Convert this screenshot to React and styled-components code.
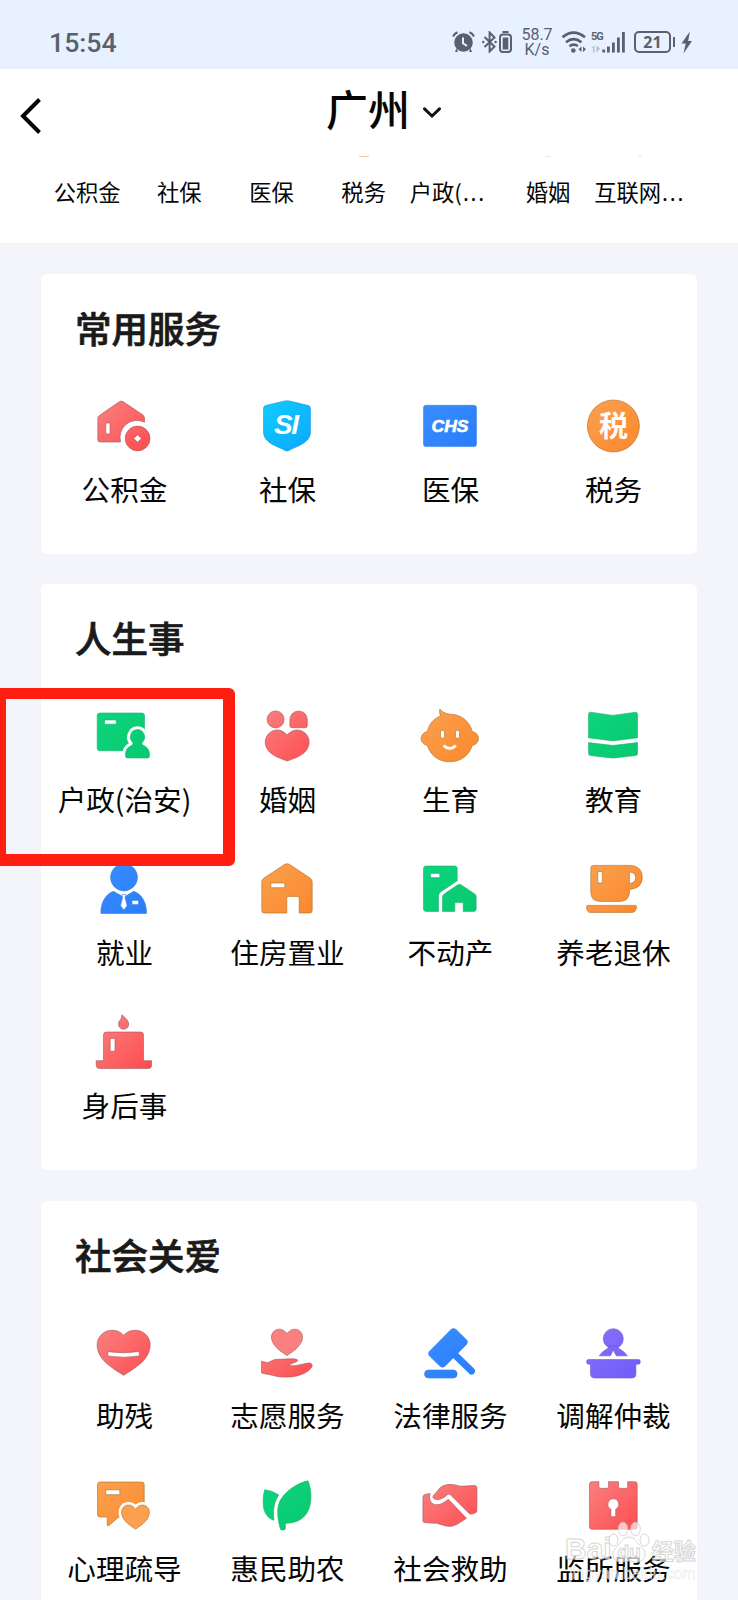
import React, { useId } from 'react'
import styled, { createGlobalStyle } from 'styled-components'

const HEART = 'M0 -8 C-3 -14 -12 -15 -15 -8 C-18 1 -8 9 0 14 C8 9 18 1 15 -8 C12 -15 3 -14 0 -8Z'
const PERSON =
  'M45.3 25.6a7.4 7.4 0 0 1 5 12.8c-1 1.4 0 2.6 2.2 3.6 4 2 5 5.5 5 9.5 0 2-.8 2.5-2.5 2.5H36c-1.8 0-2.5-.6-2.5-2.5 0-4 1-7.5 5-9.5 2.2-1 3.2-2.2 2.2-3.6a7.4 7.4 0 0 1 4.6-12.8z'

const tones = {
  red: ['#fa7f7f', '#fd4f51', '#a3565c'],
  orange: ['#fba04e', '#fb892f', '#a8702c'],
  green: ['#0cd57e', '#08c970', '#1fae6b'],
  blue: ['#3a8dff', '#297dfa', '#3b82e4'],
  purple: ['#8871fb', '#705df8', '#6a5ac4'],
  cyan: ['#10ccff', '#0ca8fc', '#1698d8'],
}

const icons = {
  fund: (
    <>
      <path d="M8 21 L27.5 7.6 Q29.2 6.6 31 7.6 L50.4 20.6 Q52.5 22 52.5 24 V28.2 A17 17 0 0 0 28.6 48 H8 Q5.8 48 5.8 45.8 V24.5 Q5.8 22.4 8 21Z" />
      <circle cx="45.6" cy="44.5" r="12.4" />
      <path className="cut" d="M13.8 29h4.2v11h-4.2zM45.6 40.7l3.8 3.8-3.8 3.8-3.8-3.8z" />
    </>
  ),
  social: (
    <>
      <path d="M10.5 11.6 L29.5 7 Q32 6.5 34.5 7 L53.5 11.6 Q55.5 12.2 55.5 14.5 V38 C55.5 49 42 52 34 56.4 Q32 57.5 30 56.4 C22 52 8.5 49 8.5 38 V14.5 Q8.5 12.2 10.5 11.6Z" />
      <text x="31.5" y="39.5" fontSize="28" fontStyle="italic" fontWeight="700" textLength="25">SI</text>
    </>
  ),
  medical: (
    <>
      <rect x="5.5" y="11.3" width="53" height="41.3" rx="2.5" />
      <text className="bold" x="32" y="38" fontSize="16.5" fontStyle="italic" fontWeight="700" textLength="37" lengthAdjust="spacingAndGlyphs">CHS</text>
    </>
  ),
  tax: (
    <>
      <circle cx="32.4" cy="32" r="26" />
      <text className="cjk" x="32.4" y="43" fontSize="29" fontWeight="700">税</text>
    </>
  ),
  household: (
    <>
      <rect x="5.2" y="9" width="47.3" height="37.7" rx="2.5" />
      <path className="cut" d="M12.5 16h11.7v4.2H12.5z" />
      <path className="ringed" d={PERSON} />
      <path d={PERSON} />
    </>
  ),
  marriage: (
    <>
      <circle cx="20.6" cy="15.4" r="8.5" />
      <path d="M34.9 21.7v-6a8.7 8.7 0 0 1 17.4 0v6q0 2-2 2H36.9q-2 0-2-2z" />
      <path d="M32.2 31c4.5-5.5 11.5-6.5 16.5-3 6.5 4.5 7 12.5 2.5 18.5C47 52 39 54.5 32.2 57 25.5 54.5 17.5 52 13.2 46.5c-4.500-6-4-14 2.5-18.5 5-3.5 12-2.5 16.5 3z" />
    </>
  ),
  baby: (
    <>
      <path d="M21.8 5c2 3 5 4.2 10 5.2 11.5 0 19.7 7 22.5 17.3 8.3 2 8.3 12 0 14-3.2 10-11.5 16.3-22.5 16.3S12.5 51.5 9.3 41.5c-8.3-2-8.3-12 0-14C11.3 20 15.5 14.5 22.5 12Q21 8.5 21.8 5z" />
      <rect className="cut" x="22.5" y="26.3" width="4" height="8" rx="1.5" />
      <rect className="cut" x="37.5" y="26.3" width="4" height="8" rx="1.5" />
      <path className="line" d="M25.6 41.5q6 6 12.2 0" />
    </>
  ),
  book: (
    <>
      <path d="M9.5 8.2 31.8 11.4 54.5 8.2Q56.5 8 56.5 10.5V33.8L33.5 36.7Q31.8 36.9 30.2 36.7L7.5 33.8V10.5Q7.5 8 9.5 8.2z" />
      <path d="M7.5 38.6 L30.2 41.3Q31.8 41.5 33.5 41.3L56.5 38.6V49.5Q56.5 51.3 54.5 51.5L33.5 53.9Q31.8 54.1 30.2 53.9L9.5 51.5Q7.5 51.3 7.5 49.5z" />
    </>
  ),
  job: (
    <>
      <circle cx="32" cy="20.4" r="13.5" />
      <path d="M8.9 56.5c-.6-9 4-20 13.5-22.5 5.5 4.4 13 4.4 18.5 0C50.5 36.5 55 47.5 54.5 56.5z" />
      <path className="line" d="M20.5 31.5Q27 35.5 31.8 38.2 36.5 35.5 42.8 31.5" />
      <path className="cut" d="M29.9 37.5h3.8l-.6 3.3 2 8-3.3 4.2-3.3-4.2 2-8zM40 43.4h6.5v4H40z" />
    </>
  ),
  housing: (
    <>
      <path d="M9 21 29.8 7.3Q32.1 6 34.4 7.3L55 21Q57.2 22.5 57.2 24.5V53.5Q57.2 56 54.8 56H44.2V41Q44.2 39.4 42.5 39.4H33.5Q31.8 39.4 31.8 41V56H9.2Q6.8 56 6.8 53.5V24.5Q6.8 22.5 9 21z" />
      <path className="cut" d="M15.8 26h14v4.7h-14z" />
    </>
  ),
  estate: (
    <>
      <path d="M8 9H36.7Q39.2 9 39.2 11.5V23.8L22.5 35Q20.5 36.5 20.5 39V54.4H8Q5.5 54.4 5.5 52V11.5Q5.5 9 8 9z" />
      <path d="M26.5 36.8 39.8 27.8Q41.4 26.8 43 27.8L56.5 36.8Q58.2 37.9 58.2 40V52Q58.2 54.4 56 54.4H45.2V45.6H36.8V54.4H24.5V40.5Q24.5 38 26.5 36.8z" />
      <path className="cut" d="M12.5 16.4h9.3v4.2h-9.3z" />
    </>
  ),
  cup: (
    <>
      <path d="M12.3 8.4H50Q61.3 9.5 61.3 20.4T48.5 32.4V35.5Q48 44.4 39 44.4H19.3Q9.8 44.4 9.8 35V11Q9.8 8.4 12.3 8.4z" />
      <path d="M6.5 48.4H54.7Q55.7 48.4 55.5 50 55 55.4 51 55.4H9Q6 55.4 5.5 50 5.5 48.4 6.5 48.4z" />
      <path className="cut" d="M16.8 14.7h4.5V26h-4.5zM48.4 15q6.2.3 6.2 5.7t-6.2 5.7z" />
    </>
  ),
  candle: (
    <>
      <path d="M29.8 4.8Q36.7 10 36.7 14.2A5.1 5.1 0 0 1 26.5 14.2Q26.5 11.5 28.5 9.5 29.8 8 29.8 4.8z" />
      <path d="M14.5 22h34Q51.5 22 51.5 25V50.7H59.6V55Q59.6 58.5 56.5 58.5H7.5Q4.2 58.5 4.2 55V50.7H11.5V25Q11.5 22 14.5 22z" />
      <path className="cut" d="M18.2 28.5h4.8v12.7h-4.8z" />
    </>
  ),
  disabled: (
    <>
      <path d="M31.6 14.2c4.5-5 13-7 20-2.5 7.5 5 8.5 14.5 3.5 23C50.5 43 39 49.5 31.6 54.3 24.3 49.5 12.8 43 8.2 34.7c-5-8.5-4-18 3.5-23 7-4.5 15.4-2.5 19.9 2.5z" />
      <path className="cut" d="M15.8 30.7Q31.6 33 47.3 30.5V35Q31.6 37.5 15.8 35z" />
    </>
  ),
  volunteer: (
    <>
      <path d={HEART} transform="translate(32 20.8) scale(1 .98)" />
      <path d="M6.5 40.2 12.5 41.7C16 40.5 18 38.3 23 38.3L36 37.8C44 37.5 44.5 40 39.5 41.5Q36.5 43 33.3 43.9Q39 45.8 45 43.8L51.5 42.2C56 41.2 58.5 43.5 56.5 46.5 52.5 52 44 55.2 36 55.9 28 56.4 22 55.8 18.5 54.5L6.5 52z" />
    </>
  ),
  law: (
    <>
      <path d="M33 8.5Q35.5 6.3 38 8.5L48.5 18.8Q50.5 21 48.5 23.5L27 45.2Q24.5 47.4 22 45.2L11.5 35Q9.3 32.5 11.5 30.2z" />
      <path className="limb" d="M35.5 32.5 53.5 50" />
      <rect x="6.5" y="49" width="32.7" height="8" rx="4" />
    </>
  ),
  mediate: (
    <>
      <circle cx="32.3" cy="17.7" r="10" />
      <path d="M28 25H36.5Q36.5 27 39.5 28.5 44 31 46.3 34.8H35.3L32.3 29 29.3 34.8H18.3Q20.5 31 25 28.5 28 27 28 25z" />
      <path d="M7.5 38.6H57.5Q59.2 38.6 59.2 40V41.5Q59.2 43.2 57.5 43.2H54.9V53Q54.9 57 51 57H13.5Q9.5 57 9.5 53V43.2H7.5Q5.7 43.2 5.7 41.5V40Q5.7 38.6 7.5 38.6z" />
    </>
  ),
  mind: (
    <>
      <path d="M8 8H49.7Q52.2 8 52.2 10.5V43H26.8L17 51.5Q15.2 52.6 15.2 50.5V43H8Q5.5 43 5.5 40.5V10.5Q5.5 8 8 8z" />
      <path className="cut" d="M13.8 15.8h14v4.9h-14z" />
      <path className="ringed" d={HEART} transform="translate(43.5 42.6) scale(.9)" />
      <path d={HEART} transform="translate(43.5 42.6) scale(.9)" />
    </>
  ),
  farming: (
    <>
      <path d="M53 6.8C56.5 15 57.5 29 52.5 38 48.5 45.5 40 49.5 30.5 49.3L30.3 54.5Q30.3 56 28.8 56H26.8Q25.5 56 25.2 54.5C23.5 48 21.5 39 23.5 31 26.5 20 40 9.5 53 6.8z" />
      <path d="M9.8 15.7Q17 16.5 23.8 21C19 28 17.5 37 19 46.3 13.5 44.5 9.5 40 8.5 33 7.8 27 8 21 9.8 15.7z" />
    </>
  ),
  rescue: (
    <>
      <path d="M24.5 12Q29.5 9.5 36 10.7L43 12.3 56.5 11.4Q58.9 11.3 58.9 14V36.5Q58.9 38.8 56.5 39.3L51.9 40.3 32.7 21Q31 19.3 29.3 20.7C27 22.8 23 26 18.8 25.5 14.3 24.8 13.8 22.2 16.8 20 19 18 20.5 14.5 24.5 12z" />
      <path d="M7.5 20.3 12.2 19.5C10.5 23.5 12 30 18 30.7 23 31 26.5 28 30.3 25.3L48.5 44.3 39.5 50Q34 53.5 28 52L18.5 49.3 7.5 48.8Q4.9 48.8 4.9 46.5V23Q4.9 20.8 7.5 20.3z" />
    </>
  ),
  prison: (
    <>
      <path d="M11 7.7H17.9V12.8Q17.9 14.3 19.4 14.3H26Q27.5 14.3 27.5 12.8V7.7H37.5V12.8Q37.5 14.3 39 14.3H45.2Q46.7 14.3 46.7 12.8V7.7H53.7Q56.2 7.7 56.2 10.2V52.8Q56.2 55.3 53.7 55.3H11Q8.5 55.3 8.5 52.8V10.2Q8.5 7.7 11 7.7z" />
      <path className="cut" d="M32.3 24.8a5.5 5.5 0 0 1 2.4 10.4v7.5h-4.8v-7.5a5.5 5.5 0 0 1 2.4-10.4z" />
    </>
  ),
}

const sections = [
  {
    title: '常用服务',
    items: [
      ['公积金', 'fund', 'red'],
      ['社保', 'social', 'cyan'],
      ['医保', 'medical', 'blue'],
      ['税务', 'tax', 'orange'],
    ],
  },
  {
    title: '人生事',
    items: [
      ['户政(治安)', 'household', 'green'],
      ['婚姻', 'marriage', 'red'],
      ['生育', 'baby', 'orange'],
      ['教育', 'book', 'green'],
      ['就业', 'job', 'blue'],
      ['住房置业', 'housing', 'orange'],
      ['不动产', 'estate', 'green'],
      ['养老退休', 'cup', 'orange'],
      ['身后事', 'candle', 'red'],
    ],
  },
  {
    title: '社会关爱',
    items: [
      ['助残', 'disabled', 'red'],
      ['志愿服务', 'volunteer', 'red'],
      ['法律服务', 'law', 'blue'],
      ['调解仲裁', 'mediate', 'purple'],
      ['心理疏导', 'mind', 'orange'],
      ['惠民助农', 'farming', 'green'],
      ['社会救助', 'rescue', 'red'],
      ['监所服务', 'prison', 'red'],
    ],
  },
]

const tabs = [
  { label: '公积金' },
  { label: '社保' },
  { label: '医保' },
  { label: '税务', edge: '#e9c9a0', edgeWidth: 10 },
  { label: '户政(', clipped: true },
  { label: '婚姻', edge: '#e6e2e0', edgeWidth: 5 },
  { label: '互联网', clipped: true, edge: '#e8e8e8', edgeWidth: 4 },
]

const ServiceIcon = ({ name, tone }) => {
  const id = useId()
  const [from, to, edge] = tones[tone]

  return (
    <Glyph viewBox="0 0 64 64" $fill={`url(#${id})`} $edge={edge}>
      <defs>
        <linearGradient id={id} gradientUnits="userSpaceOnUse" x1="8" y1="8" x2="54" y2="56">
          <stop offset="0" stopColor={from} />
          <stop offset="1" stopColor={to} />
        </linearGradient>
      </defs>
      {icons[name]}
    </Glyph>
  )
}

const StatusBar = () => (
  <Status>
    <Time>15:54</Time>
    <StatusIcon width="23" height="22" viewBox="0 0 23 22">
      <circle cx="11.5" cy="11.5" r="9.3" />
      <path d="M4.5 17 3 21h3zM18.5 17 20 21h-3z" />
      <path className="stroke" d="M1 5.5Q2.5 2.5 5.5 1.3M22 5.5Q20.5 2.5 17.5 1.3" />
      <path className="light" d="M11 6.5v5.8l4 2.7" />
    </StatusIcon>
    <StatusIcon $gap={7} width="15" height="22" viewBox="0 0 15 22">
      <path className="stroke" d="M2.5 6 12.5 15.5 7.6 20.5V1.5L12.5 6.5 2.5 16" />
      <circle cx="1.3" cy="11" r="1.2" />
      <circle cx="13.6" cy="11" r="1.2" />
    </StatusIcon>
    <StatusIcon $gap={2} width="13" height="22" viewBox="0 0 13 22">
      <rect className="stroke" x="1" y="3.5" width="11" height="17.5" rx="3" />
      <path d="M3.5 0h6v2h-6zM3.7 6.5h5.6v12H3.7z" />
    </StatusIcon>
    <Speed>
      <span>58.7</span>
      <span>K/s</span>
    </Speed>
    <StatusIcon $gap={8} width="26" height="22" viewBox="0 0 26 22">
      <path className="stroke thick" d="M1.5 6.3Q12.5-3 24 6.3M5 11.2Q12.5 5 20.5 11.2M8.5 15.3Q12.5 12 16.8 15" />
      <circle cx="12.3" cy="19.5" r="2.3" />
      <path d="M20.5 15.5v5.5L17.5 18.3zM22 15.5v5.5l3-2.7z" />
    </StatusIcon>
    <Signal>
      <Network>5G</Network>
      <StatusIcon width="35" height="22" viewBox="0 0 35 22">
        <path d="M11.3 18.5h2.8v3h-2.8zM16 15.5h2.8v6H16zM21 11.5h2.8v10H21zM26 6.5h2.8v15H26zM31 1h2.8v20.5H31z" />
        <path className="faint" d="M3.5 14.5v7h-1.5v-4.5H.5zM5.5 14.5v7L9 17.5z" />
      </StatusIcon>
    </Signal>
    <Battery>21</Battery>
    <StatusIcon $gap={5} width="12" height="23" viewBox="0 0 12 23">
      <path d="M8.8.5.5 12.5h4.2L2.5 22.5l8.5-12.5H7.2z" />
    </StatusIcon>
  </Status>
)

const App = () => (
  <Page>
    <GlobalStyle />
    <StatusBar />
    <Header>
      <TitleBar>
        <BackIcon viewBox="0 0 24 38">
          <path d="M20.5 2.5 4 19l16.5 16.5" />
        </BackIcon>
        <City>广州</City>
        <DownIcon viewBox="0 0 20 14">
          <path d="M2.5 2.8 10 10l7.5-7.2" />
        </DownIcon>
      </TitleBar>
      <Tabs>
        {tabs.map(tab => (
          <Tab key={tab.label} $clipped={tab.clipped}>
            <TabEdge $color={tab.edge} $width={tab.edgeWidth} />
            <TabLabel>
              {tab.label}
              {tab.clipped && <Dots>...</Dots>}
            </TabLabel>
          </Tab>
        ))}
      </Tabs>
    </Header>
    <Cards>
      {sections.map(section => (
        <Card key={section.title}>
          <CardTitle>{section.title}</CardTitle>
          <Grid>
            {section.items.map(([label, icon, tone]) => (
              <Item key={label}>
                <ServiceIcon name={icon} tone={tone} />
                <ItemLabel>{label}</ItemLabel>
              </Item>
            ))}
          </Grid>
        </Card>
      ))}
    </Cards>
    <Highlight />
    <Watermark>
      <Brand>
        <BrandName>Bai</BrandName>
        <Paw viewBox="0 0 42 44">
          <ellipse cx="5.5" cy="19" rx="4.5" ry="6" />
          <ellipse cx="15" cy="8" rx="4.8" ry="6.8" />
          <ellipse cx="27.5" cy="8" rx="4.8" ry="6.8" />
          <ellipse cx="36.5" cy="19" rx="4.5" ry="6" />
          <path d="M21 16C27 16 29 22 34 26.5 40 32 37 41 29 41 25 41 23 40 21 40s-4 1-8 1C5 41 2 32 8 26.5 13 22 15 16 21 16z" />
          <text x="21" y="37">du</text>
        </Paw>
        <BrandCn>经验</BrandCn>
      </Brand>
      <Site>jingyan.baidu.com</Site>
    </Watermark>
  </Page>
)

// styles ===========
const GlobalStyle = createGlobalStyle`
  * {
    box-sizing: border-box;
  }

  body {
    margin: 0;
    background: #f3f5fa;
  }
`

const Page = styled.div`
  position: relative;
  width: 738px;
  height: 1600px;
  overflow: hidden;
  background: #f3f5fa;
  color: #050505;
  font-family: 'Noto Sans CJK SC', sans-serif;
`

const Status = styled.div`
  display: flex;
  align-items: center;
  height: 69px;
  padding: 15px 45px 0 49px;
  background: #e7f1ff;
  color: #59616d;
  font-family: Roboto, sans-serif;
`

const Time = styled.span`
  margin: 1px auto 0 0;
  font-size: 26.7px;
  font-weight: 500;
  line-height: 30px;
`

const StatusIcon = styled.svg`
  flex: none;
  margin-left: ${props => props.$gap || 0}px;
  fill: #59616d;

  .stroke {
    fill: none;
    stroke: #59616d;
    stroke-width: 2;
  }

  .thick {
    stroke-width: 2.7;
  }

  .light {
    fill: none;
    stroke: #e7f1ff;
    stroke-width: 2;
  }

  .faint {
    opacity: 0.35;
  }
`

const Speed = styled.div`
  display: flex;
  flex-direction: column;
  align-items: center;
  width: 32px;
  margin-left: 9px;
  font-size: 16px;
  line-height: 15px;
`

const Signal = styled.div`
  display: flex;
  position: relative;
  margin-left: 4px;
`

const Network = styled.span`
  position: absolute;
  top: 0;
  left: 0;
  font-size: 11px;
  font-weight: 700;
  line-height: 11px;
  letter-spacing: -1px;
`

const Battery = styled.div`
  position: relative;
  width: 37px;
  height: 22px;
  margin: 0 5px 0 8px;
  border: 2px solid #59616d;
  border-radius: 5px;
  font-family: 'Noto Sans', sans-serif;
  font-size: 16px;
  font-weight: 700;
  line-height: 18px;
  text-align: center;

  &::after {
    content: '';
    position: absolute;
    top: 4px;
    right: -6px;
    width: 2px;
    height: 10px;
    background: #59616d;
  }
`

const Header = styled.header`
  height: 174px;
  background: #fff;
`

const TitleBar = styled.div`
  display: flex;
  align-items: center;
  height: 87px;
  padding-left: 19px;
`

const BackIcon = styled.svg`
  width: 24px;
  height: 38px;
  margin-top: 6px;
  fill: none;
  stroke: #050505;
  stroke-width: 4;
`

const City = styled.h1`
  margin: -9px 0 0 283px;
  font-size: 42px;
  font-weight: 500;
  line-height: 60px;
`

const DownIcon = styled.svg`
  width: 20px;
  height: 14px;
  margin: 1px 0 0 12px;
  fill: none;
  stroke: #111;
  stroke-width: 3;
  stroke-linecap: round;
`

const Tabs = styled.nav`
  display: grid;
  grid-template-columns: repeat(7, 92.2px);
  padding-left: 41px;
`

const Tab = styled.div`
  display: flex;
  flex-direction: column;
  align-items: ${props => (props.$clipped ? 'flex-start' : 'center')};
`

const TabEdge = styled.i`
  align-self: center;
  width: ${props => props.$width || 0}px;
  height: 1px;
  background: ${props => props.$color || 'transparent'};
`

const TabLabel = styled.span`
  margin-top: 18px;
  font-size: 22.3px;
  line-height: 32px;
  white-space: nowrap;
`

const Dots = styled.span`
  margin-left: 1px;
  font-family: 'Noto Sans', sans-serif;
  font-size: 22px;
  line-height: 1;
  letter-spacing: 1.8px;
`

const Cards = styled.main`
  display: flex;
  flex-direction: column;
  gap: 30.6px;
  padding: 31px 41px 0;
`

const Card = styled.section`
  flex: none;
  padding: 35px 2px 7px;
  border-radius: 6px;
  background: #fff;
`

const CardTitle = styled.h2`
  margin: -1px 0 46px 32px;
  color: #1a1a1a;
  font-size: 36.5px;
  font-weight: 500;
  line-height: 40px;
  -webkit-text-stroke: 0.7px #1a1a1a;
`

const Grid = styled.div`
  display: grid;
  grid-template-columns: repeat(4, 163px);
  grid-auto-rows: 152.9px;
`

const Item = styled.div`
  display: flex;
  flex-direction: column;
  align-items: center;
`

const Glyph = styled.svg`
  width: 64px;
  height: 64px;
  margin-right: 1px;
  fill: ${props => props.$fill};
  stroke: ${props => props.$edge};
  stroke-width: 0.6;

  .cut {
    fill: #fff;
  }

  .ringed {
    fill: #fff;
    stroke: #fff;
    stroke-width: 6.5;
  }

  .line {
    fill: none;
    stroke: #fff;
    stroke-width: 2.9;
  }

  .limb {
    fill: none;
    stroke: #2d82fc;
    stroke-width: 7;
    stroke-linecap: round;
  }

  text {
    fill: #fff;
    stroke: none;
    font-family: 'Liberation Sans', sans-serif;
    text-anchor: middle;
  }

  .bold {
    stroke: #fff;
  }

  .cjk {
    font-family: 'Noto Sans CJK SC', sans-serif;
  }
`

const ItemLabel = styled.span`
  margin-top: 10.6px;
  font-size: 28.6px;
  line-height: 40px;
  white-space: nowrap;
`

// frame round the selected service
const Highlight = styled.div`
  position: absolute;
  top: 688px;
  left: -6px;
  width: 241px;
  height: 178px;
  border: 12px solid #ff1e10;
  border-width: 11px 12px 12px;
  border-radius: 6px;
`

const Watermark = styled.div`
  position: absolute;
  top: 1521px;
  left: 565px;
  color: rgba(255, 255, 255, 0.65);
  font-family: 'Liberation Sans', sans-serif;
  font-weight: 700;
  -webkit-text-stroke: 1px rgba(200, 200, 200, 0.75);
`

const Brand = styled.div`
  display: flex;
  align-items: flex-end;
  height: 44px;
  line-height: 38px;
`

const BrandName = styled.span`
  margin-bottom: -3px;
  font-size: 30px;
`

const Paw = styled.svg`
  width: 42px;
  height: 44px;
  margin-left: -4px;
  fill: rgba(255, 255, 255, 0.65);
  stroke: rgba(200, 200, 200, 0.75);
  stroke-width: 1;

  text {
    font-size: 19px;
    text-anchor: middle;
  }
`

const BrandCn = styled.span`
  margin: 0 0 -3px 2px;
  font-family: 'Noto Sans CJK SC', sans-serif;
  font-size: 22px;
`

const Site = styled.div`
  margin-left: 4px;
  font-size: 15.7px;
  font-weight: 400;
  line-height: 18px;
  -webkit-text-stroke: 0.5px rgba(215, 215, 215, 0.6);
`

// ==================
export default App
